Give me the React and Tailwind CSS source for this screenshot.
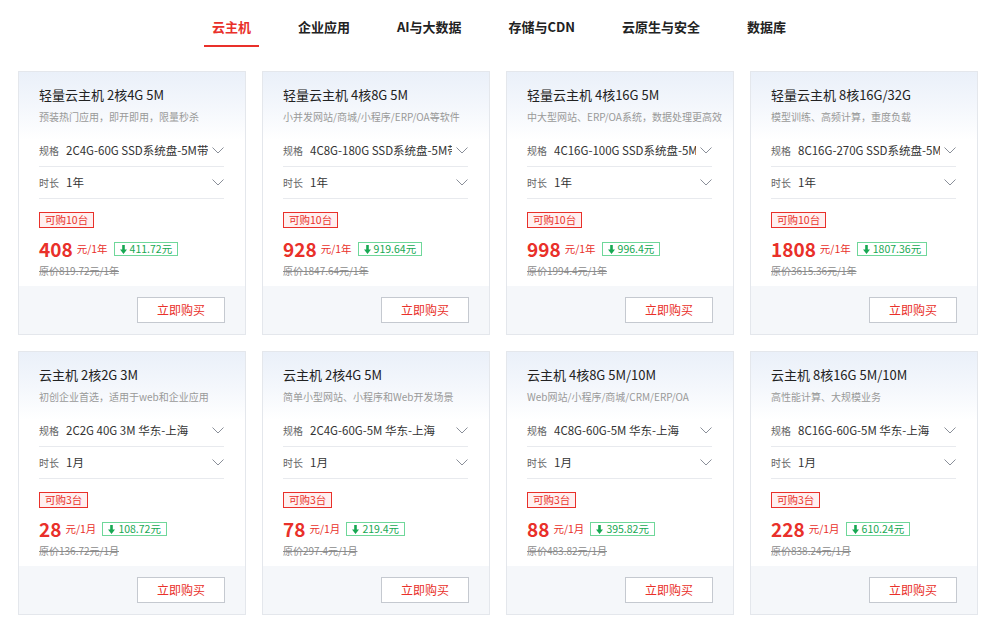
import React from "react";

const RED = "text-[#e9302a]";

const cards = [
  { title: "轻量云主机 2核4G 5M", sub: "预装热门应用，即开即用，限量秒杀", spec: "2C4G-60G SSD系统盘-5M带宽", dur: "1年", stock: "可购10台", price: "408", unit: "元/1年", save: "411.72元", orig: "原价819.72元/1年" },
  { title: "轻量云主机 4核8G 5M", sub: "小并发网站/商城/小程序/ERP/OA等软件", spec: "4C8G-180G SSD系统盘-5M带宽", dur: "1年", stock: "可购10台", price: "928", unit: "元/1年", save: "919.64元", orig: "原价1847.64元/1年" },
  { title: "轻量云主机 4核16G 5M", sub: "中大型网站、ERP/OA系统，数据处理更高效", spec: "4C16G-100G SSD系统盘-5M带宽", dur: "1年", stock: "可购10台", price: "998", unit: "元/1年", save: "996.4元", orig: "原价1994.4元/1年" },
  { title: "轻量云主机 8核16G/32G", sub: "模型训练、高频计算，重度负载", spec: "8C16G-270G SSD系统盘-5M带宽", dur: "1年", stock: "可购10台", price: "1808", unit: "元/1年", save: "1807.36元", orig: "原价3615.36元/1年" },
  { title: "云主机 2核2G 3M", sub: "初创企业首选，适用于web和企业应用", spec: "2C2G 40G 3M 华东-上海", dur: "1月", stock: "可购3台", price: "28", unit: "元/1月", save: "108.72元", orig: "原价136.72元/1月" },
  { title: "云主机 2核4G 5M", sub: "简单小型网站、小程序和Web开发场景", spec: "2C4G-60G-5M 华东-上海", dur: "1月", stock: "可购3台", price: "78", unit: "元/1月", save: "219.4元", orig: "原价297.4元/1月" },
  { title: "云主机 4核8G 5M/10M", sub: "Web网站/小程序/商城/CRM/ERP/OA", spec: "4C8G-60G-5M 华东-上海", dur: "1月", stock: "可购3台", price: "88", unit: "元/1月", save: "395.82元", orig: "原价483.82元/1月" },
  { title: "云主机 8核16G 5M/10M", sub: "高性能计算、大规模业务", spec: "8C16G-60G-5M 华东-上海", dur: "1月", stock: "可购3台", price: "228", unit: "元/1月", save: "610.24元", orig: "原价838.24元/1月" },
];

const tabs = ["云主机", "企业应用", "AI与大数据", "存储与CDN", "云原生与安全", "数据库"];

function Chevron() {
  return (
    <svg width="12" height="7" viewBox="0 0 12 7" className="shrink-0">
      <polyline points="0.5,0.5 6,6 11.5,0.5" fill="none" stroke="#8a8f99" strokeWidth="1" />
    </svg>
  );
}

function DownIcon() {
  return (
    <svg width="7" height="9" viewBox="0 0 7 9" className="shrink-0">
      <path d="M2.2 0 H4.8 V4.6 H7 L3.5 9 L0 4.6 H2.2 Z" fill="#17a852" />
    </svg>
  );
}

function Row({ label, value }) {
  return (
    <div className="flex h-8 items-center border-b border-[#e8eaee]">
      <span className="w-[27px] shrink-0 text-[10px] text-[#666]">{label}</span>
      <span className="min-w-0 flex-1 overflow-hidden whitespace-nowrap text-[11.5px] text-[#333]">{value}</span>
      <span className="ml-1 flex w-3 justify-end">
        <Chevron />
      </span>
    </div>
  );
}

function Card({ c }) {
  return (
    <div className="flex h-[264px] flex-col border border-[#e4e7ec] bg-[linear-gradient(180deg,#eaf0f9_0px,#f4f7fc_35px,#ffffff_68px)]">
      <div className="pl-5 pr-[21px] pt-[13px]">
        <div className="h-5 text-[13px] leading-5 text-[#222]">{c.title}</div>
        <div className="-mr-4 mt-[4px] h-4 whitespace-nowrap text-[10px] leading-4 text-[#999]">{c.sub}</div>
        <div className="mt-[10px]">
          <Row label="规格" value={c.spec} />
          <Row label="时长" value={c.dur} />
        </div>
        <div className="mt-[13px] flex">
          <span className={`border border-[#e9302a] bg-[#fff0f0] px-[5px] text-[10.5px] leading-[14px] ${RED}`}>{c.stock}</span>
        </div>
        <div className="mt-[9px] flex h-6 items-center">
          <span className={`text-[19px] font-semibold leading-6 ${RED}`}>{c.price}</span>
          <span className={`ml-1 text-[10.5px] ${RED}`}>{c.unit}</span>
          <span className="ml-[6px] flex h-[14px] items-center gap-[3px] border border-[#6fd79a] px-[5px] text-[10.5px] text-[#17a852]">
            <DownIcon />
            {c.save}
          </span>
        </div>
        <div className="mt-[3px] h-[14px] text-[10px] leading-[14px] text-[#8c8c8c] line-through">{c.orig}</div>
      </div>
      <div className="mt-auto flex h-[48px] items-center justify-end bg-[#f5f7fa] pr-[20px]">
        <button className={`h-[26px] w-[88px] border border-[#c5c9d0] bg-white text-[12px] ${RED}`}>立即购买</button>
      </div>
    </div>
  );
}

export default function App() {
  return (
    <div
      className="min-h-screen w-full bg-white"
      style={{ fontFamily: '"Noto Sans CJK SC", "Noto Sans", sans-serif' }}
    >
      <div className="flex justify-center gap-[47px] pt-[17px]">
        {tabs.map((t, i) => (
          <div key={t} className="relative flex flex-col items-center">
            <span className={`text-[13px] font-bold leading-5 ${i === 0 ? RED : "text-[#222]"}`}>{t}</span>
            <span className={`mt-2 h-[2px] w-[calc(100%+16px)] ${i === 0 ? "bg-[#e9302a]" : "bg-transparent"}`} />
          </div>
        ))}
      </div>
      <div className="ml-[18px] mt-6 grid w-[960px] grid-cols-4 gap-4">
        {cards.map((c) => (
          <Card key={c.title} c={c} />
        ))}
      </div>
    </div>
  );
}
